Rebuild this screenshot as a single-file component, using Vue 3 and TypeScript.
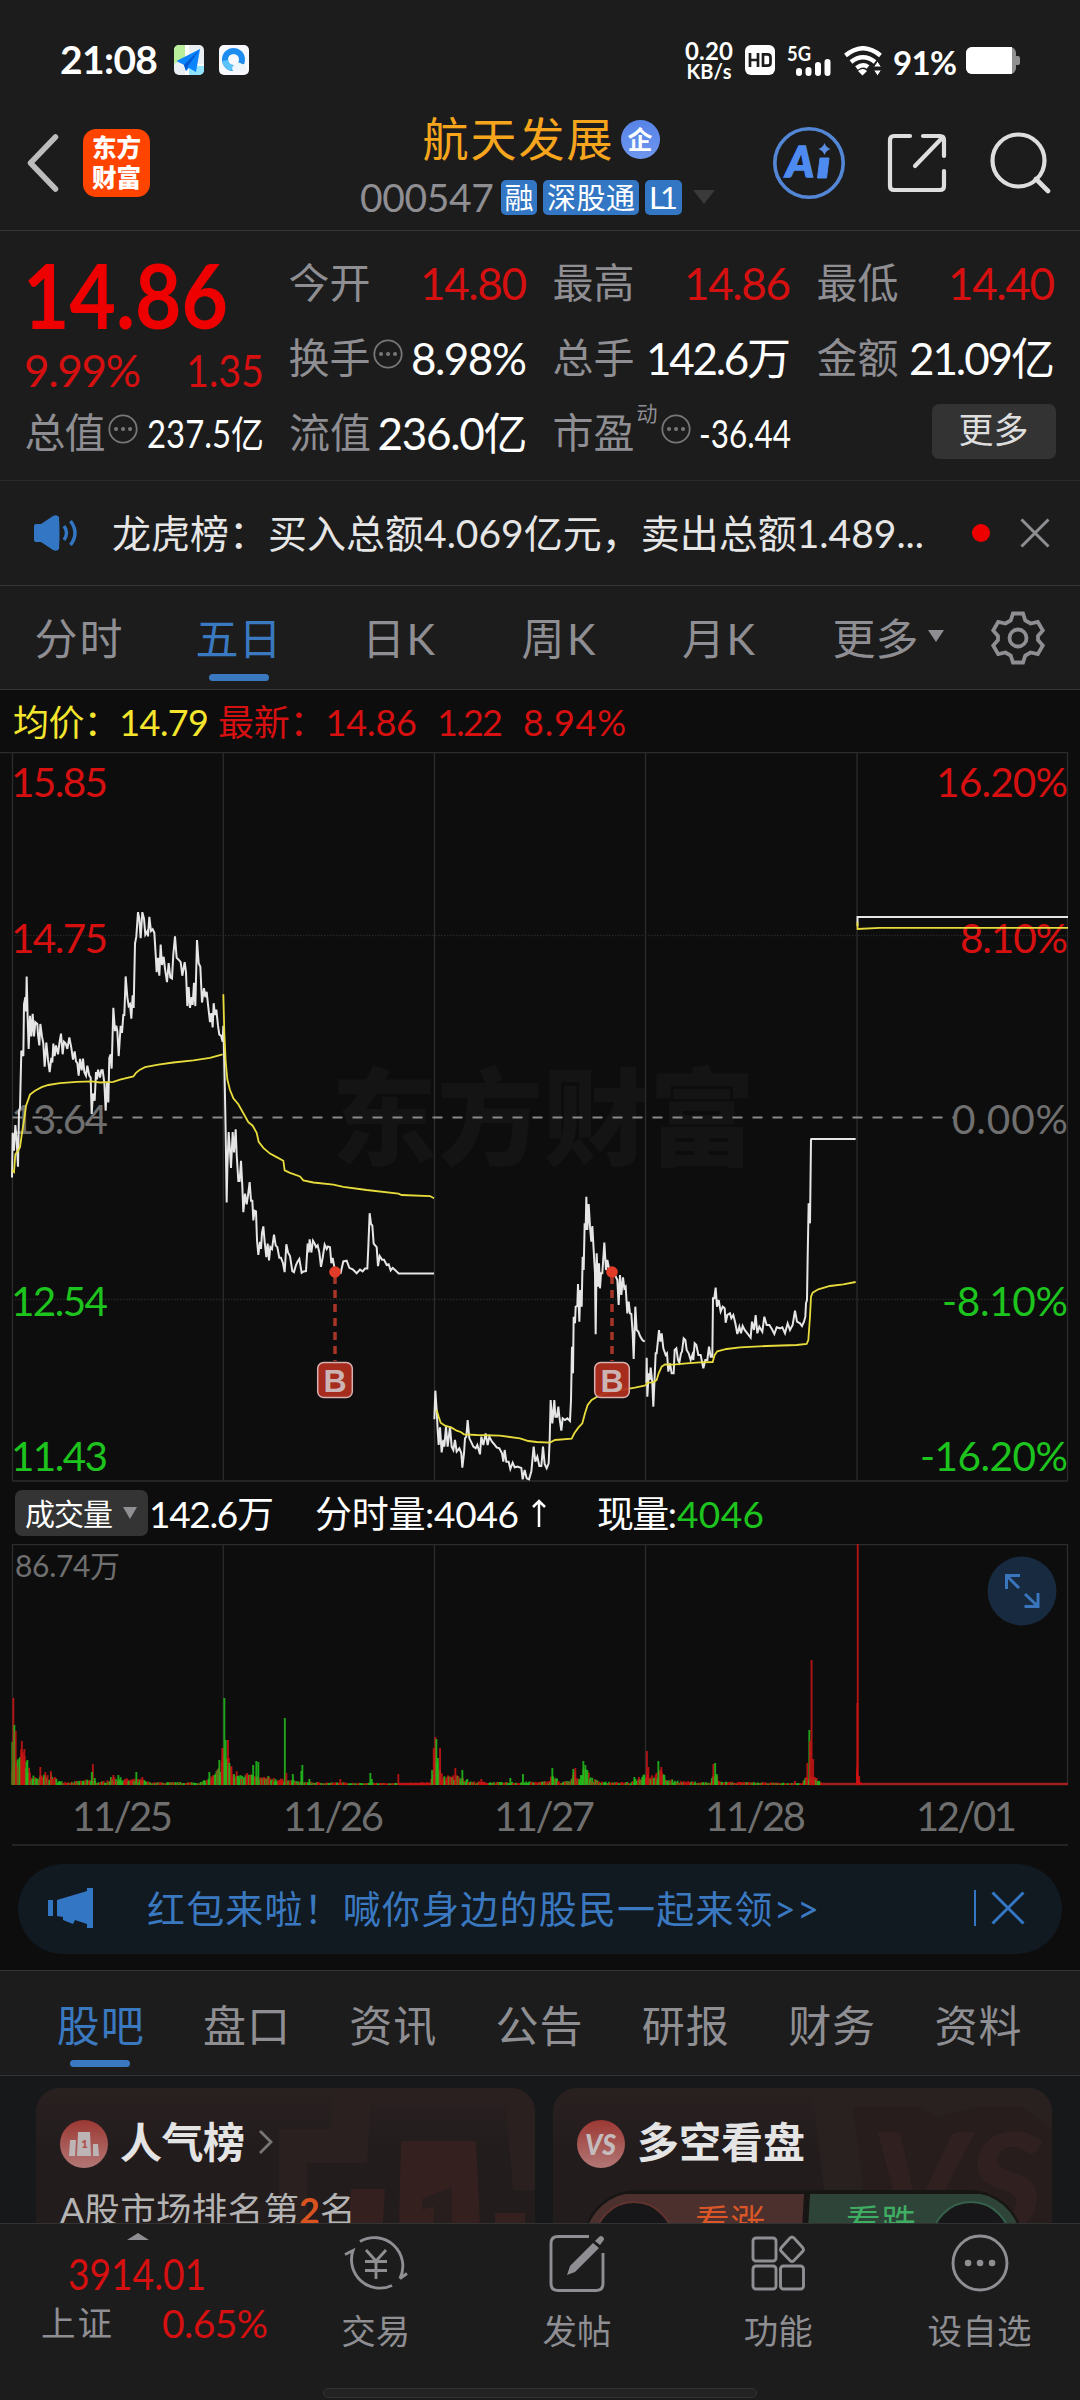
<script setup lang="ts">
import type { Directive } from 'vue'

// Makes a label fill the given width in pixels: by letter spacing,
// or with the .narrow modifier by condensing the glyphs.
const vFit: Directive<HTMLElement, number, 'narrow'> = {
  mounted(el, { value, modifiers }) {
    const count = Array.from((el.textContent ?? '').trim()).length
    if (count < 2) return
    const natural = el.getBoundingClientRect().width
    if (modifiers.narrow) {
      el.style.transformOrigin = '0 50%'
      el.style.transform = `scaleX(${value / natural})`
      el.style.marginRight = `${value - natural}px`
      return
    }
    const spacing = (value - natural) / (count - 1)
    el.style.letterSpacing = `${spacing}px`
    el.style.marginRight = `${-spacing}px`
  },
}

interface Tab { label: string; width: number; active?: boolean; arrow?: boolean }
const periods: Tab[] = [
  { label: '分时', width: 88 },
  { label: '五日', width: 86, active: true },
  { label: '日K', width: 73 },
  { label: '周K', width: 74 },
  { label: '月K', width: 73 },
  { label: '更多', width: 86, arrow: true },
]
const sections = ['股吧', '盘口', '资讯', '公告', '研报', '财务', '资料']

interface Cell { label: string; value: string; width: number; tone: string; info?: boolean }
const topCells: Cell[] = [
  { label: '今开', value: '14.80', width: 107, tone: 'up' },
  { label: '最高', value: '14.86', width: 107, tone: 'up' },
  { label: '最低', value: '14.40', width: 107, tone: 'up' },
  { label: '换手', value: '8.98%', width: 116, tone: 'plain', info: true },
  { label: '总手', value: '142.6万', width: 145, tone: 'plain' },
  { label: '金额', value: '21.09亿', width: 146, tone: 'plain' },
]

const axis = [
  { y: 45, left: '15.85', right: '16.20%', w: 132, tone: 'up' },
  { y: 200.5, left: '14.75', right: '8.10%', w: 108, tone: 'up' },
  { y: 382, left: '13.64', right: '0.00%', w: 116, tone: 'flat' },
  { y: 563.5, left: '12.54', right: '-8.10%', w: 126, tone: 'down' },
  { y: 719, left: '11.43', right: '-16.20%', w: 148, tone: 'down' },
]
const dates = ['11/25', '11/26', '11/27', '11/28', '12/01']
const gridX = [223.3, 434.5, 645.5, 857]

const priceA = '36,1225 38,1100 42,1150 46,1078 50,1120 54,1195 57,1040 60,1030 64,870 70,885 72,740 76,720 78,760 80,662 83,780 86,865 90,772 94,830 98,767 102,830 106,790 112,795 114,825 118,855 121,795 126,830 130,850 134,915 139,847 144,895 149,930 154,890 157,903 160,850 164,885 168,855 174,880 178,850 183,822 188,880 192,845 197,850 202,865 208,833 214,862 219,895 224,872 228,900 232,905 236,940 240,893 245,925 249,892 253,930 258,940 262,912 268,940 272,945 275,1047 279,990 284,1010 288,930 291,950 294,923 300,945 304,925 308,925 313,960 317,1038 321,960 325,1015 328,890 332,880 335,920 340,750 345,815 349,800 352,815 356,885 362,800 366,820 370,770 373,770 377,662 382,720 386,745 390,740 394,780 398,715 401,750 405,570 409,550 414,482 418,500 422,555 427,482 432,500 436,545 442,535 444,550 448,495 453,535 458,530 463,540 467,600 470,650 474,610 478,660 482,573 486,630 491,607 495,640 501,678 506,625 511,665 516,668 520,600 525,550 530,610 536,615 542,622 547,660 554,622 558,650 562,745 566,692 570,750 575,720 578,742 582,680 586,745 591,560 596,625 601,635 606,735 612,695 616,720 620,705 624,740 630,790 634,765 638,805 641,737 645,770 649,755 654,800 658,825 663,828 668,845 670,800 674,950 677,1100 680,1295 682,1200 686,1098 690,1150 693,1198 698,1098 702,1155 707,1090 710,1160 715,1235 719,1235 723,1178 727,1250 730,1322 735,1270 740,1300 744,1275 749,1238 753,1290 757,1290 760,1345 764,1318 768,1320 771,1400 775,1442 780,1405 783,1425 786,1380 790,1362 794,1405 799,1448 803,1410 807,1457 811,1420 816,1425 822,1385 827,1415 832,1420 838,1450 843,1450 849,1465 854,1490 859,1412 864,1435 870,1445 877,1487 882,1490 888,1470 893,1460 898,1453 905,1492 911,1488 918,1487 923,1410 926,1435 929,1398 934,1435 939,1402 944,1410 948,1420 953,1415 958,1435 963,1475 968,1450 974,1413 980,1425 984,1418 990,1420 994,1465 998,1450 1004,1480 1010,1488 1022,1492 1030,1460 1040,1458 1048,1478 1058,1482 1070,1493 1080,1483 1088,1488 1095,1480 1102,1480 1105,1420 1109,1325 1113,1355 1117,1360 1121,1410 1130,1420 1134,1473 1139,1445 1146,1455 1152,1455 1160,1470 1166,1468 1172,1485 1178,1478 1186,1485 1196,1494 1302,1494'
const meanA = '36,1205 42,1210 46,1160 54,1150 60,1140 66,1100 72,1065 78,1025 90,993 105,982 125,972 145,966 180,961 230,957 275,956 300,959 340,957 360,951 400,942 408,932 420,923 435,916 475,909 520,903 580,897 630,890 668,880'
const meanB = '670,712 673,820 677,900 682,950 690,980 700,1003 715,1020 733,1050 745,1070 758,1080 770,1100 776,1125 790,1142 810,1158 830,1168 850,1178 854,1205 870,1212 900,1222 910,1233 940,1239 1000,1245 1030,1251 1100,1260 1195,1270 1205,1274 1290,1277 1302,1283'
const priceC = '43,1138 46,1052 50,1110 53,1170 56,1215 60,1162 65,1237 70,1200 73,1220 78,1160 83,1220 90,1160 95,1220 100,1230 105,1200 110,1235 118,1225 124,1240 127,1283 132,1240 135,1195 139,1190 143,1140 148,1195 153,1205 160,1220 167,1225 172,1215 180,1243 184,1190 190,1215 197,1180 203,1215 208,1190 216,1205 222,1212 230,1222 238,1225 246,1240 250,1265 254,1230 259,1265 266,1265 271,1287 278,1268 284,1282 292,1280 304,1284 308,1318 314,1290 320,1315 327,1318 334,1295 341,1220 346,1265 352,1250 358,1278 364,1278 369,1220 374,1272 380,1285 386,1270 389,1200 392,1080 397,1150 403,1080 406,1130 411,1130 415,1100 418,1130 424,1172 428,1135 435,1140 442,1135 450,1143 453,1080 456,920 459,1000 461,830 465,850 467,800 472,798 474,732 478,845 481,750 485,800 488,650 491,690 494,550 497,570 499,470 502,570 506,492 510,560 514,605 517,558 521,630 525,700 527,883 530,640 534,740 537,670 540,745 543,700 547,700 553,608 558,690 562,660 568,690 576,697 585,705 592,720 596,795 600,705 604,765 609,712 613,745 617,740 622,820 626,785 630,820 634,822 638,880 641,957 646,800 650,870 655,875 660,888 667,900 674,905'
const priceD = '679,1030 680,953 682,1070 686,1000 689,1020 692,983 697,1030 700,1100 704,1010 707,940 710,940 717,870 721,905 725,880 730,925 737,945 741,940 745,995 750,970 755,1000 761,1000 764,930 769,925 774,960 778,968 783,940 786,935 791,895 796,900 800,930 806,940 812,960 817,945 820,960 824,910 829,915 835,945 842,945 850,985 856,960 862,960 867,920 872,950 877,950 879,775 883,775 887,743 891,800 896,780 902,815 908,800 914,805 917,848 922,825 930,820 934,835 940,825 946,850 952,882 958,860 963,880 968,858 974,870 982,880 992,893 996,845 1002,870 1007,825 1012,880 1018,860 1027,875 1033,830 1040,855 1048,855 1056,868 1063,882 1070,862 1080,865 1087,862 1095,880 1103,850 1110,870 1118,855 1125,812 1131,845 1140,850 1146,858 1152,845 1156,830 1158,790 1161,780 1163,650 1166,490 1170,550 1173,300 1174,297 1307,297'
const meanC = '50,1110 56,1130 62,1148 75,1157 95,1163 110,1172 122,1176 132,1183 170,1185 240,1187 300,1195 325,1203 350,1206 390,1208 405,1200 455,1196 463,1180 475,1163 487,1150 495,1120 503,1095 515,1080 535,1068 560,1058 610,1049 645,1043 677,1036'
const meanD = '677,1036 682,1028 700,1027 710,1020 716,1000 725,980 735,973 760,974 800,970 840,967 878,966 884,945 892,934 920,927 960,922 1040,918 1130,915 1160,912 1165,900 1170,830 1173,770 1178,758 1195,748 1230,738 1270,733 1307,726'

// Volume: an envelope of [x, height] for ordinary minutes, plus the minutes that stand out.
const envelope: [number, number][] = [
  [12, 40], [16, 26], [21, 38], [27, 24], [31, 10], [40, 10], [50, 12], [60, 4], [75, 4], [90, 6], [100, 3], [113, 9], [125, 7], [142, 6], [150, 3],
  [200, 3], [208, 7], [214, 12], [219, 20], [223, 40], [228, 36], [232, 15], [246, 15], [252, 10], [262, 9], [270, 9], [284, 6], [300, 4], [320, 3], [399, 2],
  [401, 2], [430, 3], [434, 34], [440, 14], [446, 10], [460, 11], [470, 4], [500, 3], [548, 4], [552, 12], [560, 3], [570, 5], [574, 14], [578, 7], [583, 20],
  [588, 13], [594, 6], [610, 3], [630, 3], [644, 14], [652, 12], [660, 16], [668, 6], [685, 4], [710, 3], [714, 14], [720, 4], [750, 3], [802, 2], [806, 12],
  [813, 12], [820, 3], [1068, 2],
]
const spikes: [number, number, 'r' | 'g'][] = [
  [12, 43, 'g'], [13, 87, 'r'], [14, 60, 'g'], [15.3, 54, 'r'], [21.5, 44, 'r'], [24, 36, 'r'], [27, 25, 'g'], [40, 18, 'r'], [45, 13, 'r'], [50.5, 14, 'r'],
  [92.5, 21, 'r'], [91.5, 13, 'g'], [94.5, 7, 'g'], [113, 10, 'r'], [118, 10, 'g'], [136, 13, 'g'], [142, 8, 'r'], [209, 13, 'g'], [219, 25, 'g'], [222, 37, 'r'],
  [224, 87, 'g'], [225.4, 45, 'g'], [227.6, 45, 'r'], [229, 22, 'g'], [252.8, 20, 'g'], [256, 24, 'g'], [258, 23, 'g'], [284.5, 67, 'g'], [286, 12, 'r'],
  [292.5, 11, 'g'], [302, 20, 'g'], [301, 14, 'g'], [309, 6, 'g'], [340, 6, 'r'], [370, 12, 'g'], [371.4, 6, 'g'], [398, 11, 'r'], [433.4, 37, 'r'],
  [435, 48, 'r'], [436, 46, 'g'], [437.5, 27, 'g'], [439.7, 37, 'r'], [455, 17, 'r'], [462, 15, 'g'], [481, 6, 'r'], [510, 7, 'g'], [522.6, 11, 'g'],
  [552, 17, 'g'], [573, 16, 'g'], [575, 17, 'r'], [583, 24, 'g'], [585, 20, 'g'], [587, 15, 'g'], [634, 8, 'g'], [642, 8, 'g'], [646.5, 34, 'r'], [648, 18, 'r'],
  [658, 24, 'g'], [661, 18, 'r'], [713, 21, 'r'], [714.8, 22, 'g'], [716.4, 11, 'g'], [794.6, 4, 'r'], [807, 22, 'r'], [809, 55, 'g'], [809.6, 44, 'r'],
  [811.2, 125, 'r'], [812.8, 26, 'r'], [857, 82, 'r'], [857.4, 241, 'r'], [858.8, 9, 'r'],
]
let seed = 7
function random(): number {
  seed = (seed * 16807) % 2147483647
  return seed / 2147483647
}
const bars: { x: number; h: number; up: boolean }[] = []
for (let x = 12, i = 0; x < 821; x += 0.88) {
  while (envelope[i + 1][0] < x) i++
  const [x0, h0] = envelope[i]
  const [x1, h1] = envelope[i + 1]
  const top = h0 + ((h1 - h0) * (x - x0)) / (x1 - x0)
  const noise = random()
  const up = random() > 0.5 || (x > 399 && x < 431)
  bars.push({ x, h: Math.max(1.5, top * (0.35 + 0.65 * noise)), up })
}
for (const [x, h, c] of spikes) bars.push({ x, h, up: c === 'r' })
</script>

<template>
  <main class="screen">
    <div class="status">
      <b class="clock"><span v-fit="98">21:08</span></b>
      <svg class="app-ic first" viewBox="0 0 30 30">
        <rect width="30" height="30" rx="5" fill="#e9eef2" />
        <path d="M5 0H11V13L0 19V5a5 5 0 0 1 5-5Z" fill="#b9ee9b" /><path d="M15 21H30v4a5 5 0 0 1-5 5H15Z" fill="#8fe3ff" />
        <path d="M11 0h4v30h-4zM0 19l30 2v-2H0z" fill="#fff" />
        <path d="M26 4 2.500 16 10 20l2 6 3-3 7 4Z" fill="#0a84ff" /><path d="M26 4 10 20l2 6 2-5Z" fill="#0458cf" />
      </svg>
      <svg class="app-ic" viewBox="0 0 30 30">
        <rect width="30" height="30" rx="5" fill="#f7f9fc" />
        <circle cx="14.500" cy="14.500" r="8.500" fill="none" stroke="#1f8df0" stroke-width="6" />
        <path d="M3.200 16a11.500 11.500 0 0 0 9 10l2-6a6 6 0 0 1-5-5Z" fill="#5cc3fa" />
        <path d="M14 26a4 4 0 0 1 1-6 5 5 0 0 1 8-1 4 4 0 0 1 3 7Z" fill="#eef5fb" />
      </svg>
      <span class="grow"></span>
      <div class="speed"><span v-fit="48">0.20</span><small v-fit="45">KB/s</small></div>
      <svg class="hd" viewBox="0 0 30 30">
        <rect width="30" height="30" rx="6" fill="#fff" />
        <path d="M5 8v14M13 8v14M5 15h8M18 9.300h4.500q3 0 3 3v5.400q0 3-3 3H18Z" fill="none" stroke="#1c1c1c" stroke-width="2.700" />
      </svg>
      <svg class="signal" viewBox="0 0 46 32">
        <text x="0" y="15.500" textLength="24" lengthAdjust="spacingAndGlyphs">5G</text>
        <path d="M12 26v2M21.500 25v3M31 20v8M40.500 17v11" stroke="#fff" stroke-width="6" stroke-linecap="round" />
      </svg>
      <svg class="wifi" viewBox="0 0 38 30">
        <g fill="none" stroke="#fff" stroke-width="4.400"><path d="M1.500 9.500Q19-5 36.500 9.500" /><path d="M7 16q12-9.500 24 0" /><path d="M12.500 22q6.500-5 11.500-1" /></g>
        <path d="M14 25q5-4 9 0l-4.500 4.500Z" fill="#fff" /><path d="m33.500 15 4 6h-8ZM33.500 30l4-6h-8Z" fill="#fff" stroke="#1c1c1c" />
      </svg>
      <b class="pct"><span v-fit="64">91%</span></b>
      <svg class="battery" viewBox="0 0 54 27"><rect width="50" height="27" rx="6" fill="#909090" /><path d="M50 9h2q2 0 2 2v5q0 2-2 2h-2z" fill="#909090" /><path d="M6 0h40v27H6a6 6 0 0 1-6-6V6a6 6 0 0 1 6-6Z" fill="#fff" /></svg>
    </div>

    <header class="header">
      <div class="head-left">
        <svg class="back" viewBox="0 0 34 58"><path d="M29.500 3 4.500 29l25 26" fill="none" stroke="#bdbdbd" stroke-width="5.500" stroke-linecap="round" stroke-linejoin="round" /></svg>
        <div class="logo"><span>东方</span><span>财富</span></div>
      </div>
      <div class="head-mid">
        <div class="title"><span v-fit="190">航天发展</span><i class="corp">企</i></div>
        <div class="code-row">
          <span class="code"><span v-fit="134">000547</span></span>
          <em class="tag t1">融</em><em class="tag t2"><span v-fit="88">深股通</span></em><em class="tag t3"><span v-fit="29">L1</span></em>
          <i class="tri"></i>
        </div>
      </div>
      <div class="head-right">
        <svg class="ai" viewBox="0 0 74 74">
          <circle cx="37" cy="37" r="34.200" fill="none" stroke="#5387d6" stroke-width="3.600" />
          <text x="14" y="51" textLength="28" lengthAdjust="spacingAndGlyphs">A</text>
          <path d="M48 32h9l-2.500 20h-9Z" fill="#4d8bf0" stroke="#4d8bf0" stroke-linejoin="round" /><path d="M52.500 17q1.500 4.500 6 6-4.500 1.500-6 6-1.500-4.500-6-6 4.500-1.500 6-6Z" fill="#5b8ee0" />
        </svg>
        <svg class="share" viewBox="0 0 60 60"><path d="M23 3H7Q3 3 3 7v46q0 4 4 4h46q4 0 4-4V38M36 3h17q4 0 4 4v16M56 4 28 33" fill="none" stroke="#dedede" stroke-width="4.200" stroke-linecap="round" /></svg>
        <svg class="search" viewBox="0 0 62 62"><circle cx="28.500" cy="28.500" r="26" fill="none" stroke="#dedede" stroke-width="4.200" /><path d="m46 47 12 12" stroke="#dedede" stroke-width="4.600" stroke-linecap="round" /></svg>
      </div>
    </header>

    <section class="quote">
      <div class="main-price">
        <strong><span v-fit.narrow="205">14.86</span></strong>
        <div class="change"><span v-fit="117">9.99%</span><span v-fit.narrow="78">1.35</span></div>
      </div>
      <div class="cells">
        <div v-for="c in topCells" :key="c.label" class="cell">
          <label><span v-fit="82">{{ c.label }}</span></label>
          <svg v-if="c.info" class="info" viewBox="0 0 30 30"><circle cx="15" cy="15" r="13.700" /><path d="M8 15h.1M15 15h.1M22 15h.1" /></svg>
          <span class="val" :class="c.tone"><span v-fit="c.width">{{ c.value }}</span></span>
        </div>
      </div>
      <div class="last-row">
        <div class="cell">
          <label><span v-fit="81">总值</span></label>
          <svg class="info" viewBox="0 0 30 30"><circle cx="15" cy="15" r="13.700" /><path d="M8 15h.1M15 15h.1M22 15h.1" /></svg>
          <span class="val sm"><span v-fit.narrow="117">237.5亿</span></span>
        </div>
        <div class="cell"><label><span v-fit="82">流值</span></label><span class="val"><span v-fit="150">236.0亿</span></span></div>
        <div class="cell">
          <label><span v-fit="82">市盈</span></label><sup>动</sup>
          <svg class="info" viewBox="0 0 30 30"><circle cx="15" cy="15" r="13.700" /><path d="M8 15h.1M15 15h.1M22 15h.1" /></svg>
          <span class="val sm"><span v-fit.narrow="92">-36.44</span></span>
        </div>
        <div class="cell end"><button class="more">更多</button></div>
      </div>
    </section>

    <section class="notice">
      <svg class="speaker" viewBox="0 0 46 36"><path d="M1 11q0-2 2-2h5L20 1q4-2 6 1 1 16 0 32-2 3-6 1L8 27H3q-2 0-2-2Z" fill="#3276c4" /><path d="M31 11q5 7 0 14M37.500 6q9 12 0 24" fill="none" stroke="#3276c4" stroke-width="3.400" /></svg>
      <p><span v-fit="812">龙虎榜：买入总额4.069亿元，卖出总额1.489...</span></p>
      <i class="dot"></i>
      <svg class="close" viewBox="0 0 30 30"><path d="m1.500 1.500 27 27m0-27-27 27" stroke="#8e8e93" stroke-width="3" /></svg>
    </section>

    <nav class="periods">
      <div v-for="p in periods" :key="p.label" class="period" :class="{ active: p.active, more: p.arrow }">
        <span v-fit="p.width">{{ p.label }}</span><i v-if="p.arrow"></i>
      </div>
      <svg class="gear" viewBox="0 0 54 54"><path d="M22 2.500h10l2.300 7 5.200 3 7.300-1.600 5 8.600L47 25v4l4.800 5.500-5 8.600-7.300-1.600-5.200 3-2.300 7H22l-2.300-7-5.200-3-7.300 1.600-5-8.600L7 29v-4l-4.800-5.500 5-8.600 7.300 1.600 5.200-3Z" /><circle cx="27" cy="27" r="8.500" /></svg>
    </nav>

    <section class="charts">
      <div class="legend"><span class="yellow" v-fit="196">均价：14.79</span><span class="up l2" v-fit="199">最新：14.86</span><span class="up l3" v-fit="66">1.22</span><span class="up l4" v-fit="103">8.94%</span></div>
      <svg class="price" width="1080" height="730" viewBox="0 0 1080 730">
        <text class="mark" x="331" y="405" textLength="424">东方财富</text>
        <g class="grid">
          <path d="M0 .5H1068M12 729H1068" /><path d="M12.500 0V729M1067.500 0V729" />
          <path v-for="x in gridX" :key="x" :d="`M${x} 0V729`" />
          <path class="dots" d="M12 183.500H1068M12 547.500H1068" />
        </g>
        <path class="zero" d="M12.500 365.500H956" />
        <text v-for="a in axis" :key="a.left" class="axis" :class="a.tone" x="11" :y="a.y" textLength="97">{{ a.left }}</text>
        <text v-for="a in axis" :key="a.right" class="axis" :class="a.tone" :x="1068 - a.w" :y="a.y" :textLength="a.w">{{ a.right }}</text>
        <g transform="translate(0 -12) scale(.33333 .35714)">
          <polyline class="line" :points="priceA" /><polyline class="mean" :points="meanA" /><polyline class="mean" :points="meanB" />
        </g>
        <g transform="translate(420 288) scale(.33333)">
          <polyline class="line" :points="priceC" /><polyline class="line" :points="priceD" /><polyline class="mean" :points="meanC" /><polyline class="mean" :points="meanD" />
        </g>
        <path class="line" d="M857.500 174V165H1068" /><path class="mean" d="M857.500 170V177L880 175.800H1068" />
        <g class="trade"><path d="M335 524V609M612 524V609" /><circle cx="335" cy="520" r="5.800" /><circle cx="612" cy="520" r="5.800" />
          <rect x="317.700" y="610.500" width="34.600" height="35" rx="6" /><rect x="594.700" y="610.500" width="34.600" height="35" rx="6" />
          <text x="335" y="640">B</text><text x="612" y="640">B</text></g>
      </svg>
      <div class="vol-row">
        <button class="vol-btn"><span v-fit="88">成交量</span><i></i></button>
        <span class="v1" v-fit="125">142.6万</span><span class="v2" v-fit="204">分时量:4046</span>
        <svg class="arrow" viewBox="0 0 16 30"><path d="M8 29V3M2 9l6-6 6 6" /></svg>
        <span class="v3" v-fit="80">现量:</span><span class="down" v-fit="87">4046</span>
      </div>
      <div class="vol-wrap">
        <svg class="volume" width="1080" height="242" viewBox="0 0 1080 242">
          <g class="grid"><path d="M12 .5H1068M12.500 0V241M1067.500 0V241" /><path v-for="x in gridX.slice(0, 3)" :key="x" :d="`M${x} 0V241`" /></g>
          <text class="vmax" x="15" y="33" textLength="105">86.74万</text>
          <path d="M399 240H431M810 240H1068" stroke="#a01e1e" stroke-width="2.400" />
          <path d="M808 241l3-10 2 5 6 4ZM856 241v-20l2.500 15 4 4Z" fill="#e00000" />
          <rect v-for="(b, i) in bars" :key="i" :x="b.x - 0.6" :y="241 - b.h" width="1.900" :height="b.h" :fill="b.up ? '#c81414' : '#22bb1c'" opacity=".88" />
        </svg>
        <svg class="expand" viewBox="0 0 70 70"><circle cx="35" cy="35" r="34.500" fill="#172a40" /><path d="M19.500 33V19.500H33M20 20l12 12M37.500 50.500H51V37M50.500 50 38 38" fill="none" stroke="#3a76bd" stroke-width="3" /></svg>
      </div>
      <div class="dates"><span v-for="d in dates" :key="d"><span v-fit="101">{{ d }}</span></span></div>
      <div class="banner">
        <svg class="horn" viewBox="0 0 46 40"><path d="M0 12h5v16H0zM9 12 39 3V0h6v40h-6v-4l-12-4-2 4-10-4v-3l-6-1Z" fill="#3276c4" /></svg>
        <span v-fit="672">红包来啦！喊你身边的股民一起来领&gt;&gt;</span>
        <i class="sep"></i>
        <svg class="close" viewBox="0 0 34 34"><path d="m1.500 1.500 31 31m0-31-31 31" stroke="#3276c4" stroke-width="3" /></svg>
      </div>
    </section>

    <nav class="sections">
      <div v-for="(s, i) in sections" :key="s" class="section" :class="{ active: i === 0 }"><span v-fit="87">{{ s }}</span></div>
    </nav>

    <section class="cards">
      <article class="card">
        <svg class="deco" viewBox="0 0 499 136">
          <path d="M297 0H499V102H477L470 17H335L331 75H271V136H243V41H295Z" fill="#2a201f" />
          <path d="M365 53h75l4 83h-81ZM315 101h34l-2 35h-34ZM459 125h30v11h-30Z" fill="#33201f" />
          <path d="m386 111 30-12v37h-18v-18l-12 4Z" fill="#281e1e" />
        </svg>
        <div class="card-head">
          <svg class="badge" viewBox="0 0 48 48"><defs><linearGradient id="rd" x2="0" y2="1"><stop stop-color="#9c3833" /><stop offset="1" stop-color="#b27775" /></linearGradient></defs><circle cx="24" cy="24" r="24" fill="url(#rd)" /><path d="M10 20h6l-1 16H9ZM18 12h12l1 24H17ZM33 24h5l1 12h-6Z" fill="#bdb5b5" /><text x="21" y="28">1</text></svg>
          <h3><span v-fit="125">人气榜</span></h3>
          <svg class="chev" viewBox="0 0 16 26"><path d="m2 2 11 11L2 24" fill="none" stroke="#777" stroke-width="2.800" /></svg>
        </div>
        <p class="rank"><span v-fit="239">A股市场排名第</span><b>2</b><span>名</span></p>
      </article>
      <article class="card">
        <svg class="deco" viewBox="0 0 499 136">
          <path d="M259 0H499V136H275Z" fill="#292020" /><path d="M300 19H365l20 10 38-10h46l30 22v95H315Z" fill="#271d1d" />
          <text class="vs" x="318" y="144" textLength="172" lengthAdjust="spacingAndGlyphs">VS</text>
        </svg>
        <div class="card-head">
          <svg class="badge" viewBox="0 0 48 48"><circle cx="24" cy="24" r="24" fill="url(#rd)" /><text class="vst" x="8" y="35" textLength="31" lengthAdjust="spacingAndGlyphs">VS</text></svg>
          <h3><span v-fit="168">多空看盘</span></h3>
        </div>
        <svg class="pill" viewBox="0 0 446 60">
          <rect x="2" y="2" width="442" height="110" rx="55" fill="#181515" /><path d="M4 60A50 54 0 0 1 46 6H224L221 60Z" fill="#4b302e" /><path d="M230 6H400A50 54 0 0 1 442 60H227Z" fill="#2f4439" />
          <circle cx="54" cy="53" r="39" fill="#17171a" stroke="#61332f" stroke-width="2" /><circle cx="391" cy="53" r="39" fill="#17171a" stroke="#35604a" stroke-width="2" />
          <text x="115" y="46" textLength="70" fill="#dc5727">看涨</text><text x="266" y="46" textLength="70" fill="#3fae63">看跌</text>
        </svg>
      </article>
    </section>

    <footer class="dock">
      <div class="index">
        <i class="tri-up"></i>
        <span class="idx"><span v-fit.narrow="138">3914.01</span></span>
        <div class="idx-row"><span v-fit="71">上证</span><b><span v-fit="106">0.65%</span></b></div>
      </div>
      <div class="item">
        <svg viewBox="0 0 68 60"><path d="M18 8A28.500 28.500 0 0 1 58 45l7-5M50 52A28.500 28.500 0 0 1 11 17l-8 4" transform="translate(0 .5)" /><path d="m24 17 10 11 10-11M34 28v18M23 28.500h22M23 37.500h22" /></svg><span v-fit="69">交易</span>
      </div>
      <div class="item">
        <svg viewBox="0 0 68 60"><path d="M46 3.500H15q-7 0-7 7v40q0 7 7 7h38q7 0 7-7V20" /><path class="fill" d="M50 10l6 5-24 24-8 3 3-9ZM52 8l4-4q2-2 4 0t0 4l-3 4Z" /></svg><span v-fit="69">发帖</span>
      </div>
      <div class="item">
        <svg viewBox="0 0 68 60"><rect x="9" y="5" width="23" height="23" rx="3" /><rect x="9" y="33" width="23" height="23" rx="3" /><rect x="36.500" y="33" width="23" height="23" rx="3" /><path d="M46 5q2-2 4 0l9 10q1 1.500 0 3l-9 9.500q-2 2-4 0L37 18q-1-1.500 0-3Z" /></svg><span v-fit="69">功能</span>
      </div>
      <div class="item">
        <svg viewBox="0 0 68 60"><circle cx="34" cy="30" r="27" /><path d="M22 30h.1M34 30h.1M46 30h.1" stroke-width="6.500" stroke-linecap="round" /></svg><span v-fit="104">设自选</span>
      </div>
      <i class="handle"></i>
    </footer>
  </main>
</template>

<style>
body { background: #1c1c1c; }
</style>

<style scoped>
* { box-sizing: border-box; }
svg { display: block; flex: none; }
i, em { font-style: normal; }
.screen { width: 1080px; height: 2400px; overflow: hidden; background: #1c1c1c; color: #fff; font-family: Lato, 'Noto Sans CJK SC', sans-serif; font-size: 40px; line-height: 1; display: flex; flex-direction: column; white-space: nowrap; font-kerning: none; }
.screen > * { flex: none; }
span { display: inline-block; flex: none; }
.up { color: #d61010; fill: #d61010; }
.down { color: #1dc41d; fill: #1dc41d; }
.flat { fill: #6f6f6f; }
.plain { color: #fff; }
.yellow { color: #f5e62d; }

.status { height: 104px; padding: 17px 60px 0 60px; display: flex; align-items: center; }
.clock { font-size: 39px; margin-top: -2px; }
.app-ic { width: 30px; height: 30px; margin-left: 15px; margin-top: -2px; }
.app-ic.first { margin-left: 16px; }
.grow { flex: 1; }
.speed { display: flex; flex-direction: column; align-items: center; font-weight: 700; margin-right: 12px; }
.speed span { font-size: 24px; line-height: 20px; }
.speed small { font-size: 20px; line-height: 20px; display: block; }
.hd { width: 30px; height: 30px; margin-right: 12px; margin-top: -2px; }
.signal { width: 46px; height: 32px; margin-right: 11px; overflow: visible; }
.signal text { font-size: 20px; font-weight: 700; fill: #fff; }
.wifi { width: 38px; height: 30px; margin-right: 11px; }
.pct { font-size: 33px; margin-right: 9px; padding-top: 3px; }
.battery { width: 54px; height: 27px; }

.header { height: 127px; display: grid; grid-template-columns: 300px 1fr 330px; border-bottom: 1px solid #343434; }
.head-left { display: flex; align-items: center; padding: 0 0 8px 26px; }
.back { width: 34px; height: 58px; margin-right: 23px; }
.logo { width: 67px; height: 68px; border-radius: 13px; background: #ff4400; font-size: 24.500px; font-weight: 900; display: flex; flex-direction: column; align-items: center; justify-content: center; line-height: 30px; }
.head-mid { display: flex; flex-direction: column; align-items: center; padding-top: 9px; margin-left: 20px; margin-right: -5px; }
.title { display: flex; align-items: center; font-size: 46px; color: #f6a51c; height: 52px; margin-left: 7px; }
.corp { width: 39px; height: 39px; border-radius: 50%; background: linear-gradient(#5783e8, #6e97ee); color: #fff; font-size: 25px; font-weight: 700; display: flex; align-items: center; justify-content: center; margin-left: 8px; }
.code-row { display: flex; align-items: center; height: 36px; margin-top: 14px; }
.code { color: #8e8e93; font-size: 39px; margin-right: 7px; }
.tag { height: 35px; border-radius: 5px; background: #3276c4; font-size: 29px; display: flex; align-items: center; justify-content: center; margin-right: 6px; }
.t1 { width: 36px; } .t2 { width: 96px; } .t3 { width: 37px; font-size: 31px; }
.tri { border: 11px solid transparent; border-top: 14px solid #3a3a3a; border-bottom: 0; margin-left: 5px; }
.head-right { display: flex; align-items: center; justify-content: flex-end; padding: 0 28px 8px 0; }
.ai { width: 74px; height: 74px; margin-right: 41px; }
.ai text { font-size: 42px; font-weight: 900; font-style: italic; fill: #4d8bf0; stroke: #4d8bf0; stroke-width: 1.500; }
.share { width: 60px; height: 60px; margin-right: 43px; }
.search { width: 62px; height: 62px; }

.quote { height: 250px; border-bottom: 1px solid #2a2a2a; display: grid; grid-template-columns: 238px 765px; grid-template-rows: 164px 75px; column-gap: 26px; padding-left: 26px; }
.main-price { display: flex; flex-direction: column; }
.main-price strong { font-size: 89px; color: #ee0000; font-weight: 700; height: 90px; line-height: 90px; margin-top: 19px; margin-left: -3px; }
.change { font-size: 44px; color: #d61010; display: flex; justify-content: space-between; line-height: 60px; margin-left: -2px; }
.cells { display: grid; grid-template-columns: repeat(3, 237px); column-gap: 27px; grid-auto-rows: 75px; padding-top: 14px; }
.cell { display: flex; align-items: center; height: 75px; }
.cell label { color: #8e8e93; font-size: 41px; margin-left: -1.500px; }
.val { margin-left: auto; font-size: 44px; color: #fff; }
.val.up { color: #d61010; }
.val.sm { font-size: 38px; }
.info { width: 30px; height: 30px; margin: 0 0 8px 2px; fill: none; stroke: #77777a; stroke-width: 1.800; }
.info path { stroke-width: 4; stroke-linecap: round; }
.last-row { grid-column: 1 / 3; display: grid; grid-template-columns: 238px 237px 237px 238px; column-gap: 26.500px; height: 75px; }
.last-row sup { font-size: 21px; color: #8e8e93; margin: -40px 1px 0 2px; }
button { font-family: inherit; border: 0; color: #fff; line-height: 1; }
.cell .more { width: 124px; height: 55px; margin: -3px 0 0 auto; border-radius: 7px; background: #333; color: #dedede; font-size: 35px; padding: 0 0 4px; }

.notice { height: 105px; border-bottom: 1px solid #343434; display: flex; align-items: center; padding-left: 33px; }
.speaker { width: 46px; height: 36px; }
.notice p { margin: 0 48px 0 33px; font-size: 39px; color: #e6e6e6; width: 812px; }
.dot { width: 18px; height: 18px; border-radius: 50%; background: #ee0000; margin-right: 30px; }
.notice .close { width: 30px; height: 30px; }

.periods { height: 104px; border-bottom: 1px solid #343434; display: flex; align-items: center; }
.period { width: 160px; height: 103px; display: flex; align-items: center; justify-content: center; color: #8e8e93; font-size: 43px; position: relative; left: -1.500px; padding-top: 2px; }
.period.active, .section.active { color: #3a78c0; }
.active::after { content: ''; position: absolute; bottom: 8px; width: 60px; height: 7px; border-radius: 3.500px; background: #3a78c0; }
.period i { border: 8px solid transparent; border-top: 12px solid #8e8e93; border-bottom: 0; margin: 0 0 6px 9px; }
.period.more { padding-left: 19px; }
.gear { width: 54px; height: 54px; margin-left: 31px; fill: none; stroke: #8e8e93; stroke-width: 3.800; }

.charts { background: #0d0d0d; height: 1281px; border-bottom: 1px solid #343434; display: flex; flex-direction: column; }
.legend { height: 62px; display: flex; align-items: center; padding-left: 13px; font-size: 36px; }
.l2 { margin-left: 9px; } .l3 { margin-left: 20px; } .l4 { margin-left: 20px; }
.legend span { transform: translateY(1px); }
.mark { font-size: 106px; font-weight: 900; fill: #141414; }
.grid path { stroke: #2c2c2c; stroke-width: 1.300; fill: none; }
.grid .dots { stroke-dasharray: 1.500 1.500; stroke: #262626; }
.zero { stroke: #8a8a8a; stroke-width: 2; stroke-dasharray: 10 10; }
.axis { font-size: 40.500px; }
.line, .mean { fill: none; stroke: #e6e6e6; stroke-width: 2; vector-effect: non-scaling-stroke; }
.mean { stroke: #e8dc3c; stroke-width: 1.800; }
.trade circle { fill: #e03c28; }
.trade path { stroke: #a83428; stroke-width: 3.500; stroke-dasharray: 8 6; }
.trade rect { fill: #b03020; fill-opacity: .94; stroke: #d8b0b0; stroke-width: 1.500; }
.trade text { font: 700 32px 'Liberation Sans', sans-serif; text-anchor: middle; fill: #ccb4b4; }
.vol-row { height: 62px; display: flex; align-items: center; padding-left: 15px; font-size: 37px; }
.vol-btn { width: 133px; height: 46px; border-radius: 7px; background: #343434; font-size: 30px; display: flex; align-items: center; justify-content: flex-start; padding: 0 0 1px 10px; margin-right: 1px; }
.vol-btn i { border: 7.500px solid transparent; border-top: 12px solid #909094; border-bottom: 0; margin-left: 10px; }
.v2 { margin-left: 41px; }
.arrow { width: 16px; height: 30px; margin: 0 50px 0 12px; fill: none; stroke: #fff; stroke-width: 2.500; }
.vol-wrap { position: relative; height: 242px; }
.vmax { font-size: 30px; fill: #6f6f6f; }
.expand { position: absolute; width: 70px; height: 70px; left: 986.500px; top: 12px; }
.dates { height: 60px; margin: 0 12px; border-bottom: 2px solid #222; display: grid; grid-template-columns: repeat(5, 211px); font-size: 40px; color: #6f6f6f; }
.dates > span { text-align: center; line-height: 60px; padding-left: 10px; }
.banner { height: 90px; margin: 18px 18px 0; border-radius: 45px; background: #111921; display: flex; align-items: center; padding: 0 0 2px 30px; font-size: 38px; color: #3a78c0; }
.horn { width: 46px; height: 40px; margin-right: 53px; }
.sep { width: 1.500px; height: 36px; background: #3276c4; margin-left: 155px; }
.banner .close { width: 34px; height: 34px; margin-left: 15px; }

.sections { height: 105px; border-bottom: 1px solid #343434; display: grid; grid-template-columns: repeat(7, 146.300px); padding-left: 27px; }
.section { display: flex; align-items: center; justify-content: center; color: #8e8e93; font-size: 43px; position: relative; padding-top: 5px; }

.cards { height: 147px; background: #17181a; overflow: hidden; display: flex; gap: 18px; padding: 12px 28px 0 36px; }
.card { width: 499px; height: 260px; border-radius: 24px; background: linear-gradient(#292120, #231c1d 60px); position: relative; overflow: hidden; }
.deco { position: absolute; inset: 0; width: 499px; height: 136px; }
.card-head { position: relative; display: flex; align-items: center; padding: 26px 0 0 24px; height: 82px; }
.badge { width: 48px; height: 48px; margin: 4px 12px 0 0; }
.badge text { font-size: 12px; font-weight: 900; fill: #b04f4a; }
.badge .vst { font-size: 29px; font-style: italic; fill: #c4bcbc; }
.vs { font-size: 138px; font-weight: 900; font-style: italic; fill: #302020; }
.card h3 { margin: 0; font-size: 42px; font-weight: 700; color: #e4e4e4; }
.chev { width: 16px; height: 26px; margin-left: 13px; }
.rank { position: relative; margin: 20px 0 0 24px; font-size: 35.500px; line-height: 40px; color: #b4b4b4; display: flex; }
.rank b { color: #d8531f; font-size: 36px; margin: 0; }
.pill { position: absolute; left: 27px; top: 100px; width: 446px; height: 60px; }
.pill text { font-size: 34.500px; }

.dock { position: relative; height: 176px; border-top: 1px solid #333; display: grid; grid-template-columns: 275px repeat(4, 201.300px); }
.index { display: flex; flex-direction: column; color: #d61010; font-size: 43px; padding-left: 42px; }
.tri-up { border: 11px solid transparent; border-bottom: 7px solid #8e8e93; border-top: 0; margin: 9px 0 0 85px; width: 0; }
.idx { margin: 12px 0 0 26px; height: 43px; }
.idx-row { display: flex; align-items: center; margin-top: 7px; font-size: 34.500px; color: #8e8e93; height: 43px; margin-left: -1px; }
.idx-row b { color: #d61010; font-weight: 400; font-size: 39px; margin-left: 50px; }
.item { display: flex; flex-direction: column; align-items: center; padding-top: 9px; color: #8e8e93; font-size: 34.500px; }
.item svg { width: 68px; height: 60px; fill: none; stroke: #8e8e93; stroke-width: 2.900; margin-bottom: 21px; }
.item .fill { fill: #8e8e93; stroke: none; }
.handle { position: absolute; left: 323px; top: 164px; width: 434px; height: 10px; border-radius: 5px; background: #232323; border: 1px solid #333; }
</style>
